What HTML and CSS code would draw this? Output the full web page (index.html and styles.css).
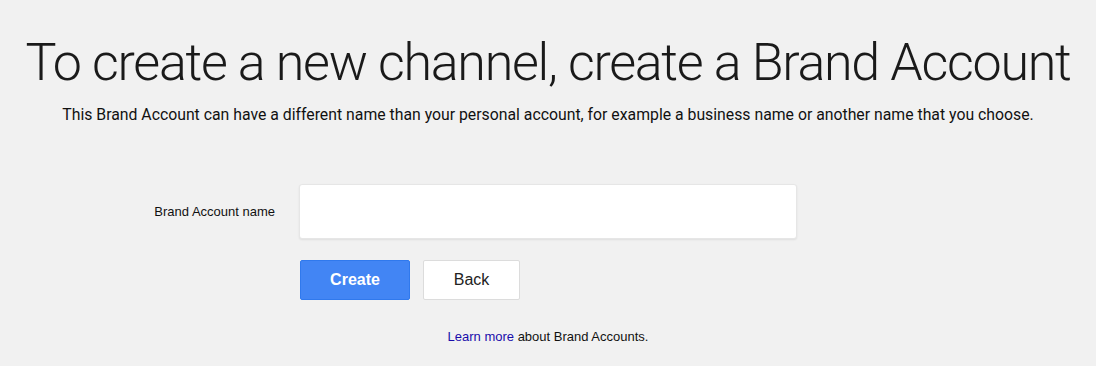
FILE: index.html
```html
<!DOCTYPE html>
<html lang="en">
<head>
  <meta charset="UTF-8" />
  <title>Create a Brand Account</title>
  <link rel="stylesheet" href="styles.css">
</head>
<body>
  <main class="page">
    <h1 class="title">To create a new channel, create a Brand Account</h1>
    <p class="subtitle">This Brand Account can have a different name than your personal account, for example a business name or another name that you choose.</p>

    <form class="brand-form" onsubmit="return false">
      <label class="field-label" for="brand-name">Brand Account name</label>
      <input class="field-input" id="brand-name" type="text">
      <div class="actions">
        <button class="btn btn-primary" type="submit">Create</button>
        <button class="btn btn-default" type="button">Back</button>
      </div>
    </form>

    <p class="learn"><a href="#">Learn more</a> about Brand Accounts.</p>
  </main>
</body>
</html>
```

FILE: styles.css
```css
* {
  box-sizing: border-box;
  margin: 0;
  padding: 0;
}
body {
  background: #f1f1f1;
  color: #222;
  font-family: 'Liberation Sans', Arial, sans-serif;
}
.page {
  text-align: center;
  padding-top: 27px;
}
.title {
  font-family: Roboto, sans-serif;
  font-weight: 300;
  font-size: 52px;
  line-height: 72px;
  color: #1a1a1a;
  letter-spacing: -1.3px;
  white-space: nowrap;
}
.subtitle {
  font-family: Roboto, sans-serif;
  font-size: 15.8px;
  line-height: 20px;
  color: #111;
  margin-top: 6px;
  white-space: nowrap;
}
.brand-form {
  display: grid;
  grid-template-columns: 1fr 498px 1fr;
  row-gap: 21px;
  margin-top: 59px;
  align-items: center;
}
.field-label {
  text-align: right;
  padding-right: 24px;
  font-size: 13px;
  color: #111;
}
.field-input {
  height: 55px;
  background: #fff;
  border: 1px solid #e6e6e6;
  border-radius: 3px;
  box-shadow: 0 1px 2px rgba(0,0,0,0.08);
  font-size: 16px;
  padding: 0 12px;
  outline: none;
}
.actions {
  grid-column: 2;
  display: flex;
  gap: 13px;
  padding-left: 1px;
}
.btn {
  height: 40px;
  border-radius: 2px;
  font-family: 'Liberation Sans', Arial, sans-serif;
  font-size: 16px;
  cursor: pointer;
}
.btn-primary {
  width: 110px;
  background: #4285f4;
  border: 1px solid #3079ed;
  color: #fff;
  font-weight: bold;
}
.btn-default {
  width: 97px;
  background: #fff;
  border: 1px solid #dcdcdc;
  color: #222;
}
.learn {
  margin-top: 29px;
  font-size: 13px;
  color: #111;
}
.learn a {
  color: #1a0dab;
  text-decoration: none;
}
```
